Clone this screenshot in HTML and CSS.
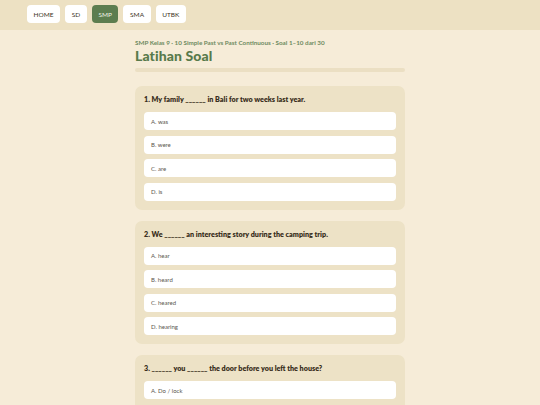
FILE: index.html
```html
<!DOCTYPE html>
<html lang="id">
<head>
<meta charset="utf-8">
<title>Latihan Soal</title>
<link rel="stylesheet" href="styles.css">
</head>
<body>
<header class="topbar">
  <nav class="nav">
    <a class="nav-btn">HOME</a>
    <a class="nav-btn">SD</a>
    <a class="nav-btn active">SMP</a>
    <a class="nav-btn">SMA</a>
    <a class="nav-btn">UTBK</a>
  </nav>
</header>
<main class="main">
  <div class="meta">SMP Kelas 9 · 10 Simple Past vs Past Continuous · Soal 1–10 dari 30</div>
  <h1 class="title">Latihan Soal</h1>
  <div class="progress"><div class="progress-fill"></div></div>

  <section class="card">
    <div class="question">1. My family ______ in Bali for two weeks last year.</div>
    <div class="options">
      <div class="option">A. was</div>
      <div class="option">B. were</div>
      <div class="option">C. are</div>
      <div class="option">D. is</div>
    </div>
  </section>

  <section class="card">
    <div class="question">2. We ______ an interesting story during the camping trip.</div>
    <div class="options">
      <div class="option">A. hear</div>
      <div class="option">B. heard</div>
      <div class="option">C. heared</div>
      <div class="option">D. hearing</div>
    </div>
  </section>

  <section class="card">
    <div class="question">3. ______ you ______ the door before you left the house?</div>
    <div class="options">
      <div class="option">A. Do / lock</div>
      <div class="option">B. Did / lock</div>
      <div class="option">C. Did / locked</div>
      <div class="option">D. Do / locked</div>
    </div>
  </section>
</main>
</body>
</html>
```

FILE: styles.css
```css
* { box-sizing: border-box; }
html, body { margin: 0; padding: 0; }
body {
  background: #f6ecd8;
  font-family: "Lato", "Noto Sans", sans-serif;
  color: #3b3123;
}
.topbar {
  background: #ede1c3;
  height: 30px;
  padding: 5px 27px 0;
}
.nav {
  display: flex;
  gap: 5px;
}
.nav-btn {
  display: flex;
  align-items: center;
  justify-content: center;
  height: 18px;
  padding: 0 6.6px;
  background: #ffffff;
  border-radius: 4px;
  font-size: 6.5px;
  color: #3b3123;
}
.nav-btn.active {
  background: #5c7d4f;
  color: #eef2e6;
}
.main {
  width: 270px;
  margin: 0 auto;
  padding-top: 9px;
}
.meta {
  font-size: 6.3px;
  font-weight: 700;
  color: #6e8a60;
  line-height: 8px;
}
.title {
  margin: 1px 0 0;
  font-size: 14px;
  line-height: 16px;
  font-weight: 900;
  color: #587a4b;
  letter-spacing: 0.1px;
}
.progress {
  margin-top: 4px;
  height: 4px;
  border-radius: 2px;
  background: #ebdfc3;
}
.progress-fill { width: 0; height: 100%; }
.card {
  margin-top: 14px;
  background: #ede2c6;
  border-radius: 7px;
  padding: 9px;
}
.card + .card { margin-top: 11px; }
.question {
  font-size: 7.2px;
  font-weight: 800;
  line-height: 9px;
  color: #3a2f20;
  margin-bottom: 8px;
}
.options {
  display: flex;
  flex-direction: column;
  gap: 5.5px;
}
.option {
  height: 18px;
  display: flex;
  align-items: center;
  padding: 0 7px;
  background: #ffffff;
  border-radius: 4px;
  font-size: 6px;
  color: #5a554d;
}
```
